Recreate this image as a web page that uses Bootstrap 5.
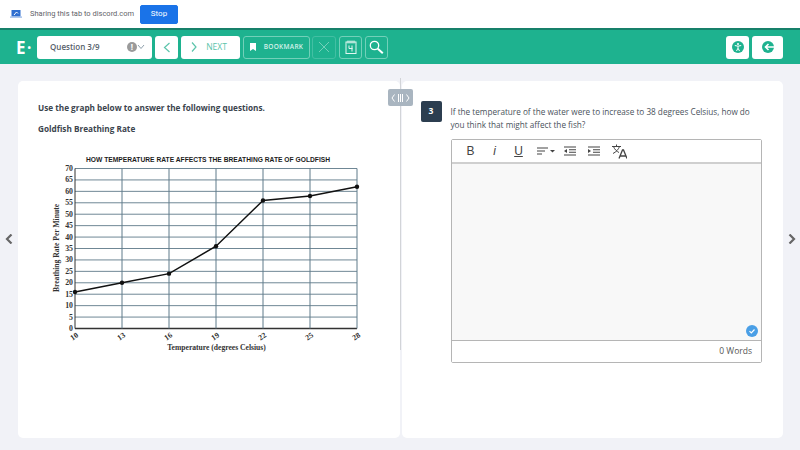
<!DOCTYPE html>
<html lang="en">
<head>
  <meta charset="UTF-8" />
  <meta name="viewport" content="width=device-width, initial-scale=1.0"/>
  <title>Question 3/9</title>
  <link href="https://cdn.jsdelivr.net/npm/bootstrap@5.3.3/dist/css/bootstrap.min.css" rel="stylesheet"/>
  <style>
    html, body { height: 450px; overflow: hidden; }
    body { font-family: "Open Sans", sans-serif; background: #f1f2f7; color: #3c4650; position: relative; }
    .share-bar { height: 28px; background: #fff; padding-left: 10px; font-family: Roboto, sans-serif; font-size: 7.5px; color: #5f6368; }
    .share-text { width: 110px; margin-left: 8px; white-space: nowrap; }
    .stop-btn { width: 38px; height: 19px; padding: 0; background: #1a73e8; border-color: #1a73e8; font-size: 8px; border-radius: 2px; color: #fff; }
    .top-bar { height: 36px; background: #1eb28f; border-top: 2px solid #17806a; padding: 5px 17px 5px 16px; }
    .logo-e { width: 21px; color: #fff; font-size: 17px; font-weight: 700; line-height: 1; }
    .logo-e span { font-size: 9px; vertical-align: 3px; margin-left: 2px; }
    .tool-btn { height: 23px; padding: 0; border-radius: 3px; background: #fff; border: 0; color: #1eb28f; font-size: 9px; }
    .tool-btn:hover { background: #fff; color: #1eb28f; }
    .q-select { width: 115px; margin-right: 3px; padding: 0 7px 0 13px; color: #55606a; font-weight: 600; font-size: 8px; }
    .q-info { width: 10px; height: 10px; border-radius: 50%; background: #9a9a9a; color: #fff; font-size: 8px; line-height: 10px; font-weight: 700; text-align: center; }
    .btn-prev { width: 23px; margin-right: 3px; }
    .btn-next { width: 59px; margin-right: 3px; gap: 9px; padding-right: 3px; font-size: 8.5px; color: #5cc4ab; }
    .btn-outline { background: transparent; border: 1px solid #72d0b9; color: #d5f1ea; }
    .btn-outline:hover { background: transparent; color: #d5f1ea; border-color: #72d0b9; }
    .btn-mark { width: 67px; margin-right: 2px; gap: 8px; font-size: 6.5px; font-weight: 600; letter-spacing: .3px; }
    .btn-cross { width: 24px; margin-right: 3px; border-color: #43bfa3; color: #72d0b9; }
    .btn-square { width: 23px; margin-right: 3px; }
    .btn-access { width: 23px; margin-right: 3px; }
    .btn-back { width: 31px; }
    .main-area { flex: 1; padding: 17px 17px 12px 18px; gap: 2px; position: relative; }
    .pane { flex: 1; background: #fff; border-radius: 5px; min-width: 0; }
    .pane-left { padding: 22px 20px 0; font-size: 8.2px; font-weight: 700; color: #3b444d; }
    .pane-left p { margin: 0 0 11px; line-height: 10px; }
    .chart-svg { display: block; margin: 16.5px 0 0 -4px; }
    .pane-right { padding: 20px 21px 0 19px; gap: 9px; }
    .q-number { width: 21px; height: 21px; flex: none; background: #2c3e50; color: #fff; border-radius: 2px; font-size: 8.5px; font-weight: 700; }
    .q-text { font-size: 8.2px; line-height: 12.5px; margin: 0 0 8px; padding-top: 5px; color: #4a535c; }
    .editor { height: 224px; border: 1px solid #b5b5b5; border-radius: 2px; }
    .editor-tools { height: 24px; padding-left: 13px; gap: 12px; border-bottom: 2px solid #cfcfcf; color: #444; background: #fff; }
    .tool-b { font-family: "Liberation Sans", sans-serif; font-size: 12px; width: 12px; text-align: center; }
    .editor-body { flex: 1; background: #f8f8f8; position: relative; }
    .check-dot { position: absolute; right: 3px; bottom: 3px; width: 12px; height: 12px; border-radius: 50%; background: #4a9fe6; }
    .editor-foot { height: 22px; border-top: 1px solid #b5b5b5; padding-right: 9px; font-size: 8.5px; color: #555; background: #fff; }
    .align-tool { margin-right: -3px; }
    .splitter-line { position: absolute; left: 400px; top: 14px; width: 1px; height: 272px; background: #d2d4d8; }
    .splitter-grip { position: absolute; left: 388px; top: 25px; width: 25px; height: 17px; background: #a9b5c0; border-radius: 2px; color: #fff; font-size: 9px; gap: 2px; }
    .side-arrow { position: absolute; top: 170px; }
    .arrow-left { left: 5px; }
    .arrow-right { left: 788px; }
    .chart-svg text { font-family: "Liberation Serif", serif; font-weight: 700; fill: #333; font-size: 7.8px; }
    .chart-svg .chart-title { font-family: "Liberation Sans", sans-serif; font-size: 6.7px; fill: #1c1c1c; }
    .chart-svg .axis-name { font-size: 7.6px; }
  </style>
</head>
<body class="d-flex flex-column">
  <div class="share-bar d-flex align-items-center">
    <svg width="12" height="10" viewBox="0 0 12 10"><rect x="1.500" y="1" width="9" height="6.500" fill="#2f6fd0"/><rect x="0" y="7.500" width="12" height="1.200" fill="#8fb2e6"/><path d="M4 6l2.500-3 1.500 1.500" stroke="#fff" fill="none"/></svg>
    <span class="share-text">Sharing this tab to discord.com</span>
    <button class="btn stop-btn">Stop</button>
  </div>

  <div class="top-bar d-flex align-items-center">
    <div class="logo-e">E<span>•</span></div>
    <div class="tool-btn q-select d-flex align-items-center">
      <span class="flex-grow-1">Question 3/9</span>
      <span class="q-info">!</span>
      <svg width="8" height="6" viewBox="0 0 8 6"><path d="M1 1l3 3.500L7 1" fill="none" stroke="#8fa0ac"/></svg>
    </div>
    <button class="btn tool-btn btn-prev d-flex align-items-center justify-content-center">
      <svg width="8" height="11" viewBox="0 0 8 11"><path d="M6.500 1L1.500 5.500l5 4.500" fill="none" stroke="#5cc4ab" stroke-width="1.200"/></svg>
    </button>
    <button class="btn tool-btn btn-next d-flex align-items-center justify-content-center">
      <svg width="6" height="10" viewBox="0 0 6 10"><path d="M1 .5L5 5 1 9.500" fill="none" stroke="#5cc4ab" stroke-width="1.200"/></svg>
      NEXT
    </button>
    <button class="btn tool-btn btn-outline btn-mark d-flex align-items-center justify-content-center">
      <svg width="6" height="8" viewBox="0 0 6 8"><path d="M0 0h6v8L3 6 0 8z" fill="#fff"/></svg>
      BOOKMARK
    </button>
    <button class="btn tool-btn btn-outline btn-cross d-flex align-items-center justify-content-center">
      <svg width="12" height="12" viewBox="0 0 12 12"><path d="M1 1l10 10M11 1L1 11" stroke="#72d0b9" stroke-width="1"/></svg>
    </button>
    <button class="btn tool-btn btn-outline btn-square d-flex align-items-center justify-content-center">
      <svg width="12" height="14" viewBox="0 0 12 14"><rect x="1" y="2" width="10" height="11.500" fill="none" stroke="#e3f6f1"/><path d="M3 .5v3M5 .5v3M7 .5v3M9 .5v3" stroke="#e3f6f1"/><path d="M4 5.500v3h3.500M7 5.500v6" fill="none" stroke="#e3f6f1"/></svg>
    </button>
    <button class="btn tool-btn btn-outline btn-square d-flex align-items-center justify-content-center">
      <svg width="15" height="15" viewBox="0 0 15 15"><circle cx="5.500" cy="5.500" r="4.200" fill="none" stroke="#fff" stroke-width="1.300"/><path d="M8.800 8.800l5 4.500" stroke="#fff" stroke-width="2"/></svg>
    </button>
    <div class="flex-grow-1"></div>
    <button class="btn tool-btn btn-access d-flex align-items-center justify-content-center">
      <svg width="12" height="12" viewBox="0 0 12 12"><circle cx="6" cy="6" r="6" fill="#1eb28f"/><circle cx="6" cy="2.900" r="1" fill="#fff"/><path d="M2.800 4.500L6 5.200l3.200-.7M6 5.200v2M6 7.200L4.500 10M6 7.200L7.500 10" stroke="#fff" fill="none"/></svg>
    </button>
    <button class="btn tool-btn btn-back d-flex align-items-center justify-content-center">
      <svg width="12" height="12" viewBox="0 0 12 12"><circle cx="6" cy="6" r="6" fill="#1eb28f"/><path d="M6.500 3L3.500 6l3 3M3.500 6H12" stroke="#fff" stroke-width="1.600" fill="none"/></svg>
    </button>
  </div>

  <div class="main-area d-flex">
    <div class="pane pane-left">
      <p>Use the graph below to answer the following questions.</p>
      <p>Goldfish Breathing Rate</p>
      <svg class="chart-svg" id="chart" width="346" height="205" viewBox="34 150 346 205"></svg>
    </div>
    <div class="pane pane-right d-flex">
      <div class="q-number d-flex align-items-center justify-content-center">3</div>
      <div class="flex-grow-1">
        <p class="q-text">If the temperature of the water were to increase to 38 degrees Celsius, how do you think that might affect the fish?</p>
        <div class="editor d-flex flex-column">
          <div class="editor-tools d-flex align-items-center">
            <span class="tool-b">B</span>
            <span class="tool-b fst-italic">i</span>
            <span class="tool-b text-decoration-underline">U</span>
            <svg class="align-tool" width="18" height="9" viewBox="0 0 18 9"><path d="M0 1h11M0 4h8M0 7h5" stroke="#444" stroke-width="1.200"/><path d="M13 3h5l-2.500 2.500z" fill="#444"/></svg>
            <svg width="12" height="10" viewBox="0 0 12 10"><path d="M0 1h12M5 3.700h7M5 6.300h7M0 9h12" stroke="#444" stroke-width="1.100"/><path d="M3 3v4L0 5z" fill="#444"/></svg>
            <svg width="12" height="10" viewBox="0 0 12 10"><path d="M0 1h12M5 3.700h7M5 6.300h7M0 9h12" stroke="#444" stroke-width="1.100"/><path d="M0 3v4l3-2z" fill="#444"/></svg>
            <svg width="15" height="15" viewBox="0 0 15 15"><path d="M0 2.500h9M4.500 .5v2M1.500 2.500c1 3 3.500 5 5.500 6M7.500 2.500c-1 3-3.500 5.500-6.500 7" stroke="#444" fill="none"/><path d="M7 14.500L10.500 6h1L15 14.500M8.300 12h5.400" stroke="#444" stroke-width="1.300" fill="none"/></svg>
          </div>
          <div class="editor-body">
            <div class="check-dot d-flex align-items-center justify-content-center">
              <svg width="8" height="8" viewBox="0 0 8 8"><path d="M1.500 4.200l1.800 1.800 3.200-3.500" fill="none" stroke="#fff" stroke-width="1.200"/></svg>
            </div>
          </div>
          <div class="editor-foot d-flex align-items-center justify-content-end">0 Words</div>
        </div>
      </div>
    </div>

    <div class="splitter-line"></div>
    <div class="splitter-grip d-flex align-items-center justify-content-center">
      <svg width="19" height="10" viewBox="0 0 19 10"><path d="M3.500 1.500L1 5l2.500 3.500M7.500 1v8M9.500 1v8M11.500 1v8M15.500 1.500L18 5l-2.500 3.500" fill="none" stroke="#fff"/></svg>
    </div>
    <svg class="side-arrow arrow-left" width="8" height="10" viewBox="0 0 8 10"><path d="M6.500 .5L2 5l4.500 4.500" fill="none" stroke="#666" stroke-width="2.200"/></svg>
    <svg class="side-arrow arrow-right" width="8" height="10" viewBox="0 0 8 10"><path d="M1.500 .5L6 5 1.500 9.500" fill="none" stroke="#666" stroke-width="2.200"/></svg>
  </div>

  <script>
    // chart drawn from its data, coordinates are page pixels (see viewBox)
    const svg = document.getElementById('chart');
    const x0 = 75, stepX = 47, y0 = 327.5, perUnit = 160 / 70;
    const temps = [10, 13, 16, 19, 22, 25, 28];
    const rates = [16, 20, 24, 36, 56, 58, 62];
    let out = '<text class="chart-title" x="208" y="160.500" text-anchor="middle">HOW TEMPERATURE RATE AFFECTS THE BREATHING RATE OF GOLDFISH</text>';
    for (let v = 0; v <= 70; v += 5) {
      const y = y0 - v * perUnit;
      out += `<line x1="${x0}" x2="${x0 + stepX * 6}" y1="${y}" y2="${y}" stroke="${v ? '#6f8795' : '#333'}" stroke-width="${v ? 1 : 1.300}"/>`;
      out += `<text x="73" y="${y + 2.500}" text-anchor="end">${v}</text>`;
    }
    temps.forEach((t, i) => {
      const x = x0 + i * stepX;
      out += `<line x1="${x}" x2="${x}" y1="${y0 - 160}" y2="${y0}" stroke="${i ? '#5f7a8a' : '#333'}"/>`;
      out += `<text x="${x - 1}" y="338" text-anchor="middle" transform="rotate(-35 ${x - 1} 335)">${t}</text>`;
    });
    const pts = rates.map((r, i) => `${x0 + i * stepX},${y0 - r * perUnit}`);
    out += `<polyline points="${pts.join(' ')}" fill="none" stroke="#111" stroke-width="1.500"/>`;
    pts.forEach(p => {
      const [x, y] = p.split(',');
      out += `<circle cx="${x}" cy="${y}" r="2.200" fill="#111"/>`;
    });
    out += '<text class="axis-name" x="216.500" y="349" text-anchor="middle">Temperature (degrees Celsius)</text>';
    out += '<text class="axis-name" x="59" y="247" text-anchor="middle" transform="rotate(-90 59 247)">Breathing Rate Per Minute</text>';
    svg.innerHTML = out;
  </script>
  <script src="https://cdn.jsdelivr.net/npm/bootstrap@5.3.3/dist/js/bootstrap.bundle.min.js"></script>
</body>
</html>
